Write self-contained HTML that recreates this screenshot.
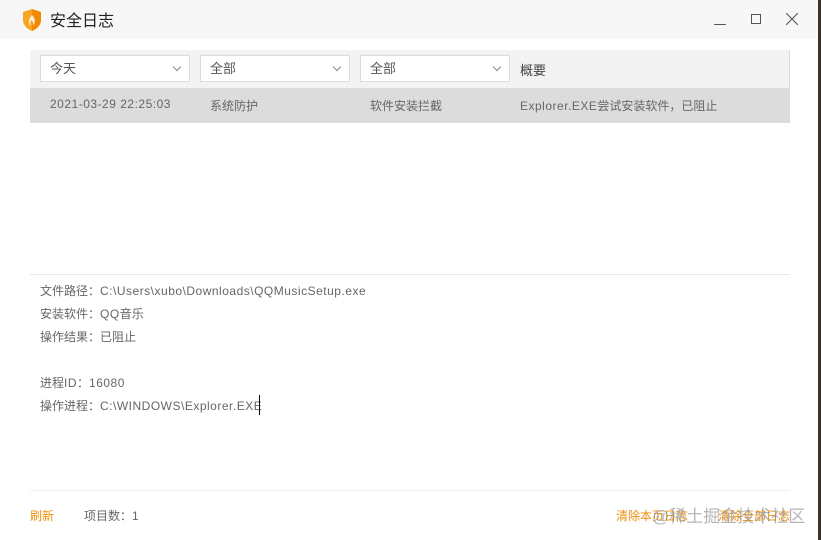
<!DOCTYPE html>
<html><head><meta charset="utf-8"><style>
*{margin:0;padding:0;box-sizing:border-box}
body{width:821px;height:540px;background:#fff;font-family:"Liberation Sans","Noto Sans CJK SC",sans-serif;position:relative;overflow:hidden;color:#666}
.abs{position:absolute}
.title{left:0;top:0;width:818px;height:39px;background:#f7f7f7}
.edge{left:818px;top:0;width:3px;height:540px;background:#3a302a}
.sel{height:27px;background:#fff;border:1px solid #ddd;font-size:13px;color:#555;padding-left:9px;line-height:25px}
.chev{position:absolute;right:9px;top:8px;width:6px;height:6px;border-right:1px solid #888;border-bottom:1px solid #888;transform:rotate(45deg)}
.t{font-size:12px;color:#666;white-space:nowrap}
.l{letter-spacing:.5px}
</style></head><body>
<div class="abs title"></div>
<div class="abs edge"></div>
<svg class="abs" style="left:22px;top:9px" width="20" height="22" viewBox="0 0 20 22"><path d="M10 0 L19 3 V11 C19 16 15 20 10 22 C5 20 1 16 1 11 V3 Z" fill="#f5a623"/><path d="M10 0 L19 3 V11 C19 16 15 20 10 22 Z" fill="#f08a00"/><path d="M10 6 C13 9 14 13 11 17 C12 14 10 12 9 11 C8 13 8 15 9 17 C6 15 6 11 10 6Z" fill="#fff" opacity=".85"/></svg>
<div class="abs" style="left:50px;top:7px;font-size:16px;color:#222">安全日志</div>
<div class="abs" style="left:714px;top:24px;width:12px;height:1px;background:#555"></div>
<div class="abs" style="left:751px;top:14px;width:10px;height:10px;border:1px solid #555"></div>
<svg class="abs" style="left:786px;top:13px" width="12" height="12"><path d="M0 0L12 12M12 0L0 12" stroke="#555" stroke-width="1.1"/></svg>

<div class="abs" style="left:30px;top:50px;width:760px;height:38px;background:#f3f3f3;border-right:1px solid #ddd"></div>
<div class="abs sel" style="left:40px;top:55px;width:150px">今天<span class="chev"></span></div>
<div class="abs sel" style="left:200px;top:55px;width:150px">全部<span class="chev"></span></div>
<div class="abs sel" style="left:360px;top:55px;width:150px">全部<span class="chev"></span></div>
<div class="abs" style="left:520px;top:60px;font-size:13px;color:#444">概要</div>

<div class="abs" style="left:30px;top:88px;width:760px;height:35px;background:#dcdcdc"></div>
<div class="abs t" style="left:50px;top:97px"><span class="l">2021-03-29 22:25:03</span></div>
<div class="abs t" style="left:210px;top:97px">系统防护</div>
<div class="abs t" style="left:370px;top:97px">软件安装拦截</div>
<div class="abs t" style="left:520px;top:97px"><span class="l">Explorer.EXE</span>尝试安装软件，已阻止</div>

<div class="abs" style="left:30px;top:274px;width:760px;height:1px;background:#e8e8e8"></div>
<div class="abs t" style="left:40px;top:282px">文件路径：<span class="l">C:\Users\xubo\Downloads\QQMusicSetup.exe</span></div>
<div class="abs t" style="left:40px;top:305px">安装软件：<span class="l">QQ</span>音乐</div>
<div class="abs t" style="left:40px;top:328px">操作结果：已阻止</div>
<div class="abs t" style="left:40px;top:374px">进程<span class="l">ID</span>：<span class="l">16080</span></div>
<div class="abs t" style="left:40px;top:397px">操作进程：<span class="l">C:\WINDOWS\Explorer.EXE</span></div>
<div class="abs" style="left:259px;top:395px;width:1px;height:20px;background:#000"></div>

<div class="abs" style="left:30px;top:490px;width:760px;height:1px;background:#eee"></div>
<div class="abs t" style="left:30px;top:507px;color:#f0900a">刷新</div>
<div class="abs t" style="left:84px;top:507px">项目数：<span class="l">1</span></div>
<div class="abs t" style="left:616px;top:507px;color:#f0900a">清除本页日志</div>
<div class="abs t" style="left:718px;top:507px;color:#f0900a">清除全部日志</div>
<div class="abs" style="left:652px;top:502px;font-size:17px;color:rgba(150,150,150,.7);white-space:nowrap">@稀土掘金技术社区</div>
</body></html>
